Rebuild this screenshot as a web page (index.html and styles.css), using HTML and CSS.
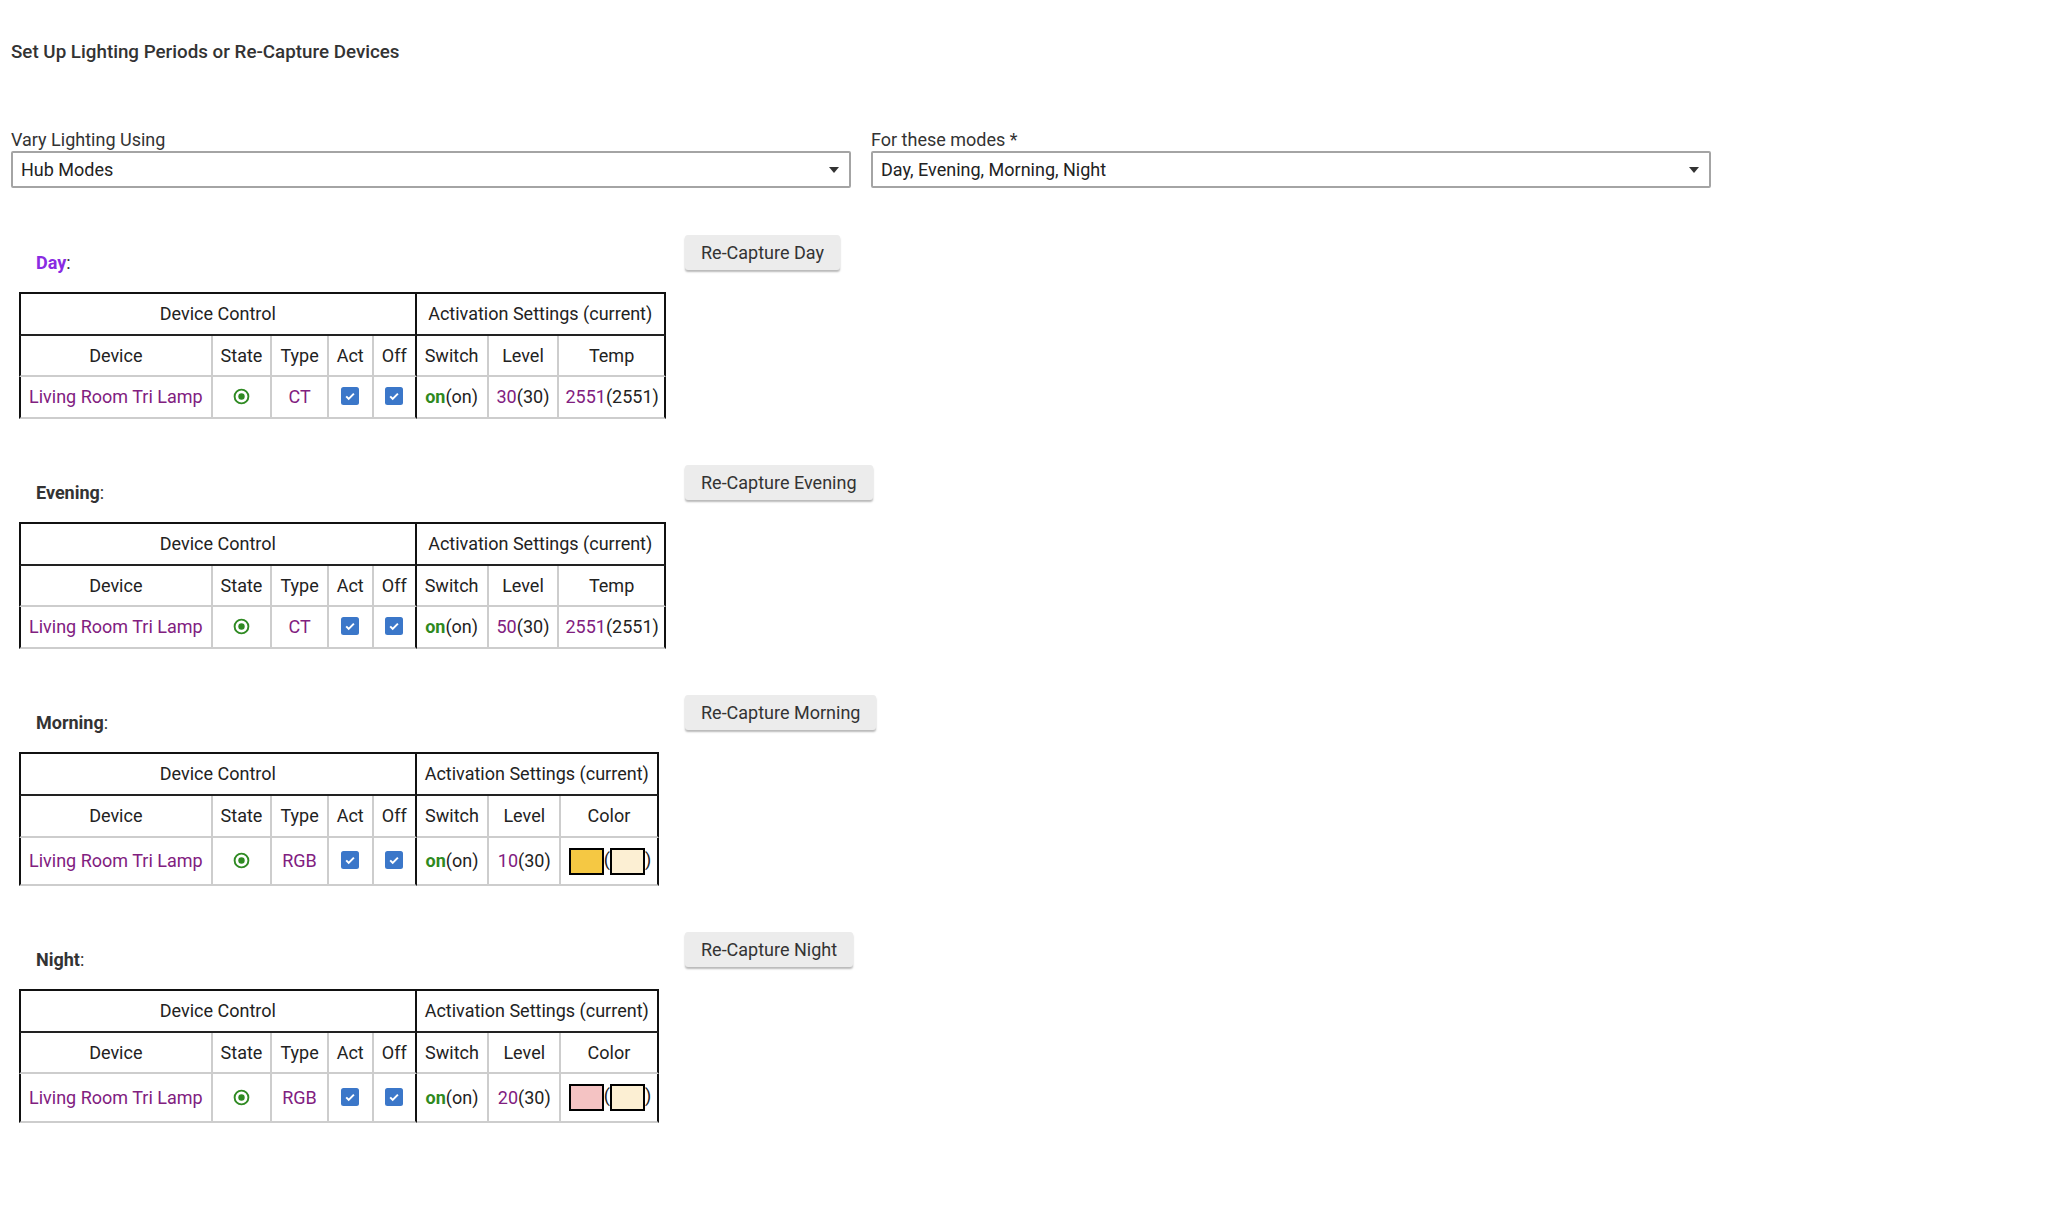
FILE: index.html
```html
<!DOCTYPE html>
<html lang="en">
<head>
    <meta charset="UTF-8">
    <title>Set Up Lighting Periods</title>
    <link rel="stylesheet" href="styles.css">
</head>
<body>
    <h3 class="page-title">Set Up Lighting Periods or Re-Capture Devices</h3>

    <div class="inputs">
        <div class="field">
            <label>Vary Lighting Using</label>
            <div class="select">Hub Modes<span class="caret"></span></div>
        </div>
        <div class="field">
            <label>For these modes *</label>
            <div class="select">Day, Evening, Morning, Night<span class="caret"></span></div>
        </div>
    </div>

    <!-- Day -->
    <div class="period">
        <div class="period-main">
            <div class="period-name"><b class="current">Day</b>:</div>
            <table class="devices">
                <tr>
                    <th colspan="5" class="group">Device Control</th>
                    <th colspan="3" class="group last">Activation Settings (current)</th>
                </tr>
                <tr>
                    <th class="first">Device</th><th>State</th><th>Type</th><th>Act</th><th class="sep">Off</th>
                    <th>Switch</th><th>Level</th><th class="last">Temp</th>
                </tr>
                <tr>
                    <td class="first dev">Living Room Tri Lamp</td>
                    <td><svg class="radio" viewBox="0 0 18 18"><circle cx="9" cy="9" r="7.3" fill="none" stroke="#2f8a22" stroke-width="2"/><circle cx="9" cy="9" r="3.4" fill="#2f8a22"/></svg></td>
                    <td class="val">CT</td>
                    <td><svg class="chk" viewBox="0 0 18 18"><rect width="18" height="18" rx="2.5" fill="#3b77c9"/><path d="M5.2 9.4l2.5 2.5 5.2-5.3" fill="none" stroke="#fff" stroke-width="2"/></svg></td>
                    <td class="sep"><svg class="chk" viewBox="0 0 18 18"><rect width="18" height="18" rx="2.5" fill="#3b77c9"/><path d="M5.2 9.4l2.5 2.5 5.2-5.3" fill="none" stroke="#fff" stroke-width="2"/></svg></td>
                    <td><span class="on">on</span>(on)</td>
                    <td><span class="val">30</span>(30)</td>
                    <td class="last temp"><span class="val">2551</span>(2551)</td>
                </tr>
            </table>
        </div>
        <button class="btn">Re-Capture Day</button>
    </div>

    <!-- Evening -->
    <div class="period">
        <div class="period-main">
            <div class="period-name"><b>Evening</b>:</div>
            <table class="devices">
                <tr>
                    <th colspan="5" class="group">Device Control</th>
                    <th colspan="3" class="group last">Activation Settings (current)</th>
                </tr>
                <tr>
                    <th class="first">Device</th><th>State</th><th>Type</th><th>Act</th><th class="sep">Off</th>
                    <th>Switch</th><th>Level</th><th class="last">Temp</th>
                </tr>
                <tr>
                    <td class="first dev">Living Room Tri Lamp</td>
                    <td><svg class="radio" viewBox="0 0 18 18"><circle cx="9" cy="9" r="7.3" fill="none" stroke="#2f8a22" stroke-width="2"/><circle cx="9" cy="9" r="3.4" fill="#2f8a22"/></svg></td>
                    <td class="val">CT</td>
                    <td><svg class="chk" viewBox="0 0 18 18"><rect width="18" height="18" rx="2.5" fill="#3b77c9"/><path d="M5.2 9.4l2.5 2.5 5.2-5.3" fill="none" stroke="#fff" stroke-width="2"/></svg></td>
                    <td class="sep"><svg class="chk" viewBox="0 0 18 18"><rect width="18" height="18" rx="2.5" fill="#3b77c9"/><path d="M5.2 9.4l2.5 2.5 5.2-5.3" fill="none" stroke="#fff" stroke-width="2"/></svg></td>
                    <td><span class="on">on</span>(on)</td>
                    <td><span class="val">50</span>(30)</td>
                    <td class="last temp"><span class="val">2551</span>(2551)</td>
                </tr>
            </table>
        </div>
        <button class="btn">Re-Capture Evening</button>
    </div>

    <!-- Morning -->
    <div class="period">
        <div class="period-main">
            <div class="period-name"><b>Morning</b>:</div>
            <table class="devices">
                <tr>
                    <th colspan="5" class="group">Device Control</th>
                    <th colspan="3" class="group last">Activation Settings (current)</th>
                </tr>
                <tr>
                    <th class="first">Device</th><th>State</th><th>Type</th><th>Act</th><th class="sep">Off</th>
                    <th>Switch</th><th>Level</th><th class="last">Color</th>
                </tr>
                <tr>
                    <td class="first dev">Living Room Tri Lamp</td>
                    <td><svg class="radio" viewBox="0 0 18 18"><circle cx="9" cy="9" r="7.3" fill="none" stroke="#2f8a22" stroke-width="2"/><circle cx="9" cy="9" r="3.4" fill="#2f8a22"/></svg></td>
                    <td class="val">RGB</td>
                    <td><svg class="chk" viewBox="0 0 18 18"><rect width="18" height="18" rx="2.5" fill="#3b77c9"/><path d="M5.2 9.4l2.5 2.5 5.2-5.3" fill="none" stroke="#fff" stroke-width="2"/></svg></td>
                    <td class="sep"><svg class="chk" viewBox="0 0 18 18"><rect width="18" height="18" rx="2.5" fill="#3b77c9"/><path d="M5.2 9.4l2.5 2.5 5.2-5.3" fill="none" stroke="#fff" stroke-width="2"/></svg></td>
                    <td><span class="on">on</span>(on)</td>
                    <td><span class="val">10</span>(30)</td>
                    <td class="last color"><span class="swatch" style="background:#f5c843"></span>(<span class="swatch" style="background:#fcefd3"></span>)</td>
                </tr>
            </table>
        </div>
        <button class="btn">Re-Capture Morning</button>
    </div>

    <!-- Night -->
    <div class="period">
        <div class="period-main">
            <div class="period-name"><b>Night</b>:</div>
            <table class="devices">
                <tr>
                    <th colspan="5" class="group">Device Control</th>
                    <th colspan="3" class="group last">Activation Settings (current)</th>
                </tr>
                <tr>
                    <th class="first">Device</th><th>State</th><th>Type</th><th>Act</th><th class="sep">Off</th>
                    <th>Switch</th><th>Level</th><th class="last">Color</th>
                </tr>
                <tr>
                    <td class="first dev">Living Room Tri Lamp</td>
                    <td><svg class="radio" viewBox="0 0 18 18"><circle cx="9" cy="9" r="7.3" fill="none" stroke="#2f8a22" stroke-width="2"/><circle cx="9" cy="9" r="3.4" fill="#2f8a22"/></svg></td>
                    <td class="val">RGB</td>
                    <td><svg class="chk" viewBox="0 0 18 18"><rect width="18" height="18" rx="2.5" fill="#3b77c9"/><path d="M5.2 9.4l2.5 2.5 5.2-5.3" fill="none" stroke="#fff" stroke-width="2"/></svg></td>
                    <td class="sep"><svg class="chk" viewBox="0 0 18 18"><rect width="18" height="18" rx="2.5" fill="#3b77c9"/><path d="M5.2 9.4l2.5 2.5 5.2-5.3" fill="none" stroke="#fff" stroke-width="2"/></svg></td>
                    <td><span class="on">on</span>(on)</td>
                    <td><span class="val">20</span>(30)</td>
                    <td class="last color"><span class="swatch" style="background:#f4c3c3"></span>(<span class="swatch" style="background:#fcefd3"></span>)</td>
                </tr>
            </table>
        </div>
        <button class="btn">Re-Capture Night</button>
    </div>
</body>
</html>
```

FILE: styles.css
```css
body {
    font-family: Roboto, "Liberation Sans", sans-serif;
    font-size: 18px;
    color: #222;
    background: #fff;
    margin: 0;
    padding: 0 11px 60px;
}
.page-title {
    margin: 41px 0 0;
    font-size: 18.8px;
    line-height: 22px;
    font-weight: 500;
    color: #333;
}
.inputs {
    display: grid;
    grid-template-columns: 840px 840px;
    column-gap: 20px;
    margin-top: 66px;
    padding-bottom: 1px;
}
.field label {
    display: block;
    line-height: 21px;
    margin-bottom: 1px;
    color: #333;
}
.select {
    position: relative;
    box-sizing: border-box;
    height: 37px;
    line-height: 33px;
    padding-left: 8px;
    border: 2px solid #a4a4a4;
    border-radius: 2px;
    color: #222;
}
.caret {
    position: absolute;
    right: 10px;
    top: 14px;
    border-left: 5px solid transparent;
    border-right: 5px solid transparent;
    border-top: 6px solid #333;
}
.period {
    display: grid;
    grid-template-columns: 664px auto;
    column-gap: 10px;
    align-items: start;
    margin-top: 46px;
}
.period-main {
    padding-top: 17px;
}
.period-name {
    line-height: 21px;
    padding-left: 25px;
    color: #333;
}
.period-name b {
    font-weight: 700;
}
.period-name .current {
    color: #8a2be2;
}
.btn {
    justify-self: start;
    height: 35px;
    padding: 0 16px;
    font-family: inherit;
    font-size: 18px;
    color: #333;
    background: #ececec;
    border: none;
    border-radius: 3px;
    box-shadow: 0 2px 2px rgba(0, 0, 0, 0.28);
}
.devices {
    margin: 19px 0 0 8px;
    border-collapse: separate;
    border-spacing: 0;
    border-top: 2px solid #111;
}
.devices th,
.devices td {
    padding: 9px 8px 8.7px;
    line-height: 22px;
    font-weight: 400;
    text-align: center;
    vertical-align: middle;
    white-space: nowrap;
    border-right: 2px solid #cdcdcd;
    border-bottom: 2px solid #cdcdcd;
}
.devices th.group {
    border-bottom: 2px solid #222;
    border-right: 2px solid #111;
}
.devices th.group:first-child,
.devices .first {
    border-left: 2px solid #111;
}
.devices .sep,
.devices .last {
    border-right: 2px solid #111;
}
.devices .dev,
.devices .val {
    color: #81207f;
}
.devices .on {
    color: #2f8a1f;
    font-weight: 700;
}
.radio {
    width: 17px;
    height: 17px;
    vertical-align: -2px;
}
.chk {
    width: 18px;
    height: 18px;
    vertical-align: -2px;
}
.devices td.temp {
    padding-left: 6px;
    padding-right: 5px;
}
.devices td.color {
    padding: 10px 5px 9.5px 7px;
}
.swatch {
    display: inline-block;
    width: 31px;
    height: 23px;
    border: 2px solid #000;
    vertical-align: middle;
}
```
